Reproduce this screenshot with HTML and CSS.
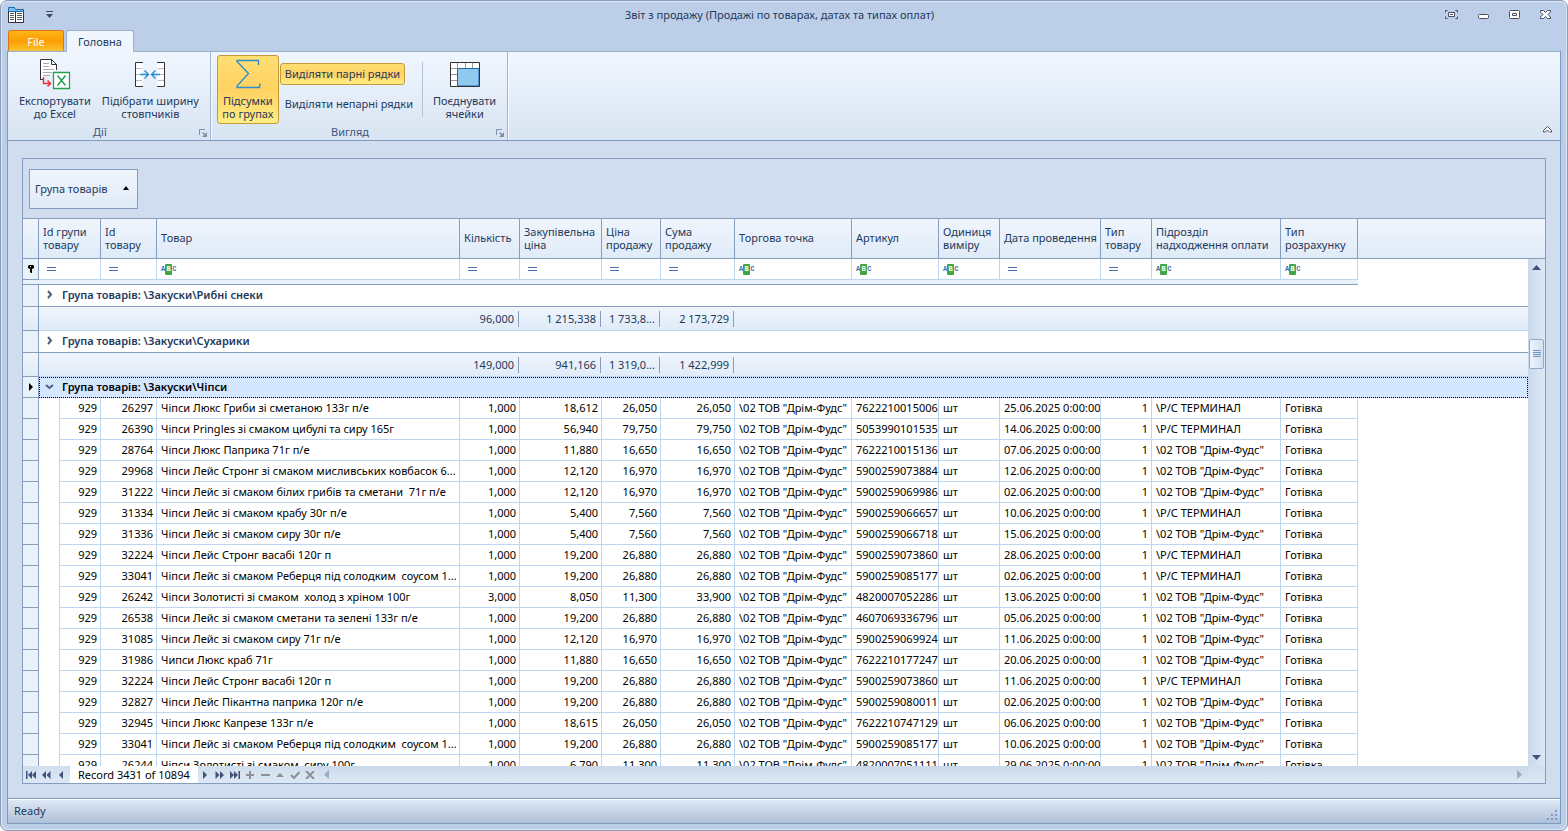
FILE: index.html
```html
<!DOCTYPE html>
<html lang="uk">
<head>
    <meta charset="UTF-8">
    <meta name="viewport" content="width=device-width, initial-scale=1.0">
    <title>Звіт з продажу</title>
    <link rel="stylesheet" href="styles.css">
</head>
<body>
    <div class="window">
        <header class="titlebar">
            <div class="quick-access">
                <svg width="16" height="16" viewBox="0 0 16 16">
                    <path d="M.5 3V15.500h15V3z" fill="#fff" stroke="#333"/>
                    <path d="M.5 4.500V.5H6.500l1 2h8v2z" fill="#83beec" stroke="#1769aa"/>
                    <path d="M7.500 5v10" stroke="#333"/>
                    <path d="M2 6.500h4M2 8.500h4M2 10.500h4M2 12.500h4M9 6.500h5M9 8.500h5M9 10.500h5M9 12.500h5" stroke="#555"/>
                </svg>
                <button type="button" class="icon-btn" aria-label="Налаштувати панель">
                    <svg width="7" height="7" viewBox="0 0 7 7"><path d="M0 .5h7" stroke="#444a5c"/><path d="M0 3h7L3.500 7z" fill="#444a5c"/></svg>
                </button>
            </div>
            <h1>Звіт з продажу (Продажі по товарах, датах та типах оплат)</h1>
            <div class="window-buttons">
                <button type="button" class="icon-btn" aria-label="На весь екран">
                    <svg width="13" height="9" viewBox="0 0 13 9" fill="none" stroke="#4a4f60"><path d="M.5 2.500v-2h2M10.500.5h2v2M.5 6.500v2h2M10.500 8.500h2v-2"/><path d="M3.500 2.500h6v4h-6z" fill="#fff"/><path d="M5 4.500h3"/></svg>
                </button>
                <button type="button" class="icon-btn" aria-label="Згорнути">
                    <svg width="11" height="9" viewBox="0 0 11 9"><rect x=".5" y="4.500" width="10" height="4" rx="1" fill="#fff" stroke="#4a4f60"/></svg>
                </button>
                <button type="button" class="icon-btn" aria-label="Відновити">
                    <svg width="11" height="9" viewBox="0 0 11 9" stroke="#4a4f60"><rect x=".5" y=".5" width="10" height="8" rx="1" fill="#fff"/><path d="M3.500 3.500h4v2h-4z" fill="none"/></svg>
                </button>
                <button type="button" class="icon-btn" aria-label="Закрити">
                    <svg width="11" height="9" viewBox="0 0 11 9"><path d="M.5.5h3l2 2 2-2h3v1.500L8 4.500l2.500 2.500v1.500h-3l-2-2-2 2h-3V7L3 4.500.5 2z" fill="#fff" stroke="#4a4f60"/></svg>
                </button>
            </div>
        </header>

        <nav class="tabs">
            <button type="button" class="tab tab-file">File</button>
            <button type="button" class="tab tab-active">Головна</button>
        </nav>

        <div class="ribbon">
            <section class="ribbon-group">
                <div class="ribbon-items">
                    <button type="button" class="big-btn">
                        <svg width="32" height="32" viewBox="0 0 32 32" fill="none">
                            <path d="M1.500 21V1.500h11l5 5V12M1 21.500h3" stroke="#333" fill="#fff"/>
                            <path d="M12.500 1.500v5h5z" stroke="#333" fill="#fff"/>
                            <path d="M4 5.500h6M4 8.500h6M4 11.500h11M4 14.500h9M4 17.500h7" stroke="#aaa"/>
                            <path d="M4.500 19v6.500H11M8.500 22.500l3 3-3 3" stroke="#e8333c" stroke-width="1.500"/>
                            <path d="M14.500 14.500h16v16h-16z" fill="#fff" stroke="#21a04f" stroke-width="1.300"/>
                            <path d="M18.500 17.500l8 10M26.500 17.500l-8 10" stroke="#21a04f" stroke-width="1.500"/>
                        </svg>
                        <span>Експортувати<br>до Excel</span>
                    </button>
                    <button type="button" class="big-btn">
                        <svg width="32" height="32" viewBox="0 0 32 32" fill="none">
                            <path d="M1.500 4.500h7v24h-7zM23.500 4.500h7v24h-7z" fill="#fff"/>
                            <path d="M2 10.500h6M2 16.500h4M2 22.500h6M24 10.500h6M26 16.500h4M24 22.500h6" stroke="#bbb"/>
                            <path d="M9 4.500H1.500v24H9M23 4.500h7.500v24H23" stroke="#333"/>
                            <path d="M6 16.500h8M10.500 12.500l4 4-4 4M26 16.500h-8M21.500 12.500l-4 4 4 4" stroke="#2a8dd0" stroke-width="1.400"/>
                        </svg>
                        <span>Підібрати ширину<br>стовпчиків</span>
                    </button>
                </div>
                <div class="ribbon-caption">Дії
                    <svg class="launcher" width="8" height="8" viewBox="0 0 8 8"><path d="M.5 6V.5H6" fill="none" stroke="#8090a8"/><path d="M8 3v5H3l2-2-2-2 1-1 2 2z" fill="#8090a8"/></svg>
                </div>
            </section>
            <section class="ribbon-group">
                <div class="ribbon-items">
                    <button type="button" class="big-btn checked" aria-pressed="true">
                        <svg width="32" height="32" viewBox="0 0 32 32"><path d="M26.500 7V2.500H5v1L16.500 15.500 5 28v1.500h22.500l.5-4" fill="none" stroke="#2b8ed0" stroke-width="1.400"/></svg>
                        <span>Підсумки<br>по групах</span>
                    </button>
                    <div class="small-btns">
                        <button type="button" class="small-btn checked" aria-pressed="true">Виділяти парні рядки</button>
                        <button type="button" class="small-btn">Виділяти непарні рядки</button>
                    </div>
                    <div class="ribbon-sep"></div>
                    <button type="button" class="big-btn">
                        <svg width="32" height="32" viewBox="0 0 32 32">
                            <path d="M1.500 4.500h29v24h-29z" fill="#fff"/>
                            <path d="M8.500 5v5M16.500 5v5M23.500 5v5M2 10.500h6M2 16.500h6M2 22.500h6" stroke="#999"/>
                            <path d="M8.500 28V10.500H30V28z" fill="#91c8ee" stroke="#1a68ae"/>
                            <path d="M1.500 4.500h29v24h-29z" fill="none" stroke="#333"/>
                        </svg>
                        <span>Поєднувати<br>ячейки</span>
                    </button>
                </div>
                <div class="ribbon-caption">Вигляд
                    <svg class="launcher" width="8" height="8" viewBox="0 0 8 8"><path d="M.5 6V.5H6" fill="none" stroke="#8090a8"/><path d="M8 3v5H3l2-2-2-2 1-1 2 2z" fill="#8090a8"/></svg>
                </div>
            </section>
            <button type="button" class="icon-btn collapse" aria-label="Згорнути стрічку">
                <svg width="9" height="7" viewBox="0 0 9 7"><path d="M.5 4.500l4-4 4 4v1.500h-2l-2-2-2 2h-2z" fill="#fff" stroke="#4a4f60"/></svg>
            </button>
        </div>

        <main class="workspace">
            <div class="grid">
                <div class="group-panel">
                    <button type="button" class="group-chip">Група товарів
                        <svg width="6" height="4" viewBox="0 0 6 4"><path d="M0 4h6L3 0z" fill="#000"/></svg>
                    </button>
                </div>
                <div class="grid-view">
                    <table class="report">
                        <colgroup>
                            <col class="c-mark"><col class="c-indent"><col class="c-group"><col class="c-id"><col class="c-name">
                            <col class="c-qty"><col class="c-buy"><col class="c-price"><col class="c-sum"><col class="c-shop">
                            <col class="c-code"><col class="c-unit"><col class="c-date"><col class="c-type"><col class="c-dept">
                            <col class="c-pay"><col><col class="c-scroll">
                        </colgroup>
                        <thead>
                            <tr>
                                <th></th>
                                <th colspan="2">Id групи<br>товару</th>
                                <th>Id<br>товару</th>
                                <th>Товар</th>
                                <th>Кількість</th>
                                <th>Закупівельна<br>ціна</th>
                                <th>Ціна<br>продажу</th>
                                <th>Сума<br>продажу</th>
                                <th>Торгова точка</th>
                                <th>Артикул</th>
                                <th>Одиниця<br>виміру</th>
                                <th>Дата проведення</th>
                                <th>Тип<br>товару</th>
                                <th>Підрозділ<br>надходження оплати</th>
                                <th>Тип<br>розрахунку</th>
                                <th class="rest" colspan="2"></th>
                            </tr>
                        </thead>
                        <tbody id="reportBody"></tbody>
                    </table>
                    <div class="vscroll">
                        <svg width="9" height="5" viewBox="0 0 9 5"><path d="M0 5h9L4.500 0z" fill="#45517a"/></svg>
                        <div class="thumb">
                            <svg width="8" height="8" viewBox="0 0 8 8"><path d="M0 .5h8M0 2.500h8M0 4.500h8M0 6.500h8" stroke="#7493c4"/></svg>
                        </div>
                        <svg width="9" height="5" viewBox="0 0 9 5"><path d="M0 0h9L4.500 5z" fill="#45517a"/></svg>
                    </div>
                </div>
                <div class="navigator">
                    <button type="button" aria-label="Перший"><svg width="10" height="8" viewBox="0 0 10 8"><path d="M0 0h1.500v8H0zM6 0v8L2 4zM10 0v8L6 4z"/></svg></button>
                    <button type="button" aria-label="Попередня сторінка"><svg width="10" height="8" viewBox="0 0 10 8"><path d="M5 0v8L1 4zM9.500 0v8l-4-4z"/></svg></button>
                    <button type="button" aria-label="Попередній"><svg width="10" height="8" viewBox="0 0 10 8"><path d="M7 0v8L3 4z"/></svg></button>
                    <span class="record">Record 3431 of 10894</span>
                    <button type="button" aria-label="Наступний"><svg width="10" height="8" viewBox="0 0 10 8"><path d="M3 0v8l4-4z"/></svg></button>
                    <button type="button" aria-label="Наступна сторінка"><svg width="10" height="8" viewBox="0 0 10 8"><path d="M.5 0v8l4-4zM5 0v8l4-4z"/></svg></button>
                    <button type="button" aria-label="Останній"><svg width="10" height="8" viewBox="0 0 10 8"><path d="M0 0v8l4-4zM4 0v8l4-4zM8.500 0H10v8H8.500z"/></svg></button>
                    <button type="button" class="off" aria-label="Додати"><svg width="10" height="8" viewBox="0 0 10 8"><path d="M4 0h2v3h3v2H6v3H4V5H1V3h3z"/></svg></button>
                    <button type="button" class="off" aria-label="Видалити"><svg width="10" height="8" viewBox="0 0 10 8"><path d="M1 3h9v2H1z"/></svg></button>
                    <button type="button" class="off" aria-label="Редагувати"><svg width="10" height="8" viewBox="0 0 10 8"><path d="M1 6h8L5 2z"/></svg></button>
                    <button type="button" class="off" aria-label="Зберегти"><svg width="10" height="8" viewBox="0 0 10 8"><path d="M1 4l3 3 5.500-6" fill="none" stroke="#8f9092" stroke-width="2"/></svg></button>
                    <button type="button" class="off" aria-label="Скасувати"><svg width="10" height="8" viewBox="0 0 10 8"><path d="M1 0l8 8M9 0L1 8" fill="none" stroke="#8f9092" stroke-width="2"/></svg></button>
                    <div class="hscroll">
                        <svg width="5" height="9" viewBox="0 0 5 9"><path d="M5 0v9L0 4.500z" fill="#9aabc8"/></svg>
                        <svg width="5" height="9" viewBox="0 0 5 9"><path d="M0 0v9l5-4.500z" fill="#9aabc8"/></svg>
                    </div>
                </div>
            </div>
        </main>

        <footer class="statusbar">
            <span>Ready</span>
            <svg width="11" height="11" viewBox="0 0 11 11" fill="#7f9cc4"><path d="M8 0h2v2H8zM4 4h2v2H4zM8 4h2v2H8zM0 8h2v2H0zM4 8h2v2H4zM8 8h2v2H8z"/></svg>
        </footer>
    </div>

    <script>
        const SHOP = '\\02 ТОВ "Дрім-Фудс"';
        const TERMINAL = '\\Р/С ТЕРМИНАЛ';

        // id, товар, кількість, закупівельна ціна, ціна, сума, артикул, дата, підрозділ
        const rows = [
            ['26297', 'Чіпси Люкс Гриби зі сметаною 133г п/е', '1,000', '18,612', '26,050', '26,050', '7622210015006', '25.06.2025', TERMINAL],
            ['26390', 'Чіпси Pringles зі смаком цибулі та сиру 165г', '1,000', '56,940', '79,750', '79,750', '5053990101535', '14.06.2025', TERMINAL],
            ['28764', 'Чіпси Люкс Паприка 71г п/е', '1,000', '11,880', '16,650', '16,650', '7622210015136', '07.06.2025', SHOP],
            ['29968', 'Чіпси Лейс Стронг зі смаком мисливських ковбасок 6...', '1,000', '12,120', '16,970', '16,970', '5900259073884', '12.06.2025', SHOP],
            ['31222', 'Чіпси Лейс зі смаком білих грибів та сметани  71г п/е', '1,000', '12,120', '16,970', '16,970', '5900259069986', '02.06.2025', SHOP],
            ['31334', 'Чіпси Лейс зі смаком крабу 30г п/е', '1,000', '5,400', '7,560', '7,560', '5900259066657', '10.06.2025', TERMINAL],
            ['31336', 'Чіпси Лейс зі смаком сиру 30г п/е', '1,000', '5,400', '7,560', '7,560', '5900259066718', '15.06.2025', SHOP],
            ['32224', 'Чіпси Лейс Стронг васабі 120г п', '1,000', '19,200', '26,880', '26,880', '5900259073860', '28.06.2025', TERMINAL],
            ['33041', 'Чіпси Лейс зі смаком Реберця під солодким  соусом 1...', '1,000', '19,200', '26,880', '26,880', '5900259085177', '02.06.2025', TERMINAL],
            ['26242', 'Чіпси Золотисті зі смаком  холод з хріном 100г', '3,000', '8,050', '11,300', '33,900', '4820007052286', '13.06.2025', SHOP],
            ['26538', 'Чіпси Лейс зі смаком сметани та зелені 133г п/е', '1,000', '19,200', '26,880', '26,880', '4607069336796', '05.06.2025', SHOP],
            ['31085', 'Чіпси Лейс зі смаком сиру 71г п/е', '1,000', '12,120', '16,970', '16,970', '5900259069924', '11.06.2025', SHOP],
            ['31986', 'Чипси Люкс краб 71г', '1,000', '11,880', '16,650', '16,650', '7622210177247', '20.06.2025', SHOP],
            ['32224', 'Чіпси Лейс Стронг васабі 120г п', '1,000', '19,200', '26,880', '26,880', '5900259073860', '11.06.2025', TERMINAL],
            ['32827', 'Чіпси Лейс Пікантна паприка 120г п/е', '1,000', '19,200', '26,880', '26,880', '5900259080011', '02.06.2025', SHOP],
            ['32945', 'Чіпси Люкс Капрезе 133г п/е', '1,000', '18,615', '26,050', '26,050', '7622210747129', '06.06.2025', SHOP],
            ['33041', 'Чіпси Лейс зі смаком Реберця під солодким  соусом 1...', '1,000', '19,200', '26,880', '26,880', '5900259085177', '10.06.2025', SHOP],
            ['26244', 'Чіпси Золотисті зі смаком  сиру 100г', '1,000', '6,790', '11,300', '11,300', '4820007051111', '29.06.2025', SHOP]
        ];

        const EQ = '<svg class="eq" width="9" height="4" viewBox="0 0 9 4"><path d="M0 .5h9M0 3.500h9" stroke="#4a6ea9"/></svg>';
        const ABC = '<span class="abc">A<b>B</b>C</span>';
        const PIN = '<svg width="6" height="8" viewBox="0 0 6 8"><path d="M1 0h4l1 1v2L4 4v4H3L2 7V4L0 3V1z"/><path d="M2 1h1v1H2z" fill="#fff"/></svg>';
        const CURSOR = '<svg width="5" height="8" viewBox="0 0 5 8"><path d="M1 0v8l4-4z"/></svg>';

        function filterRow() {
            const kinds = [EQ, ABC, EQ, EQ, EQ, EQ, ABC, ABC, ABC, EQ, EQ, ABC, ABC];
            return '<tr class="filter"><td class="mark">' + PIN + '</td><td colspan="2">' + EQ + '</td>' +
                kinds.map(k => '<td>' + k + '</td>').join('') + '<td class="rest" colspan="2"></td></tr>' +
                '<tr class="filter-gap"><td colspan="16"></td><td class="rest" colspan="2"></td></tr>';
        }

        function groupRow(name, open) {
            const arrow = open ? 'M1 3l3.500 3L8 3' : 'M3 1l3 3.500L3 8';
            return '<tr class="group' + (open ? ' focused' : '') + '"><td class="mark">' + (open ? CURSOR : '') + '</td><td colspan="16">' +
                '<svg width="9" height="9" viewBox="0 0 9 9"><path d="' + arrow + '" fill="none" stroke="#505c7d" stroke-width="2"/></svg>' +
                'Група товарів: \\Закуски\\' + name + '</td><td class="rest"></td></tr>';
        }

        function summaryRow(values) {
            return '<tr class="summary"><td class="mark"></td><td colspan="4"></td>' +
                values.map(v => '<td><span>' + v + '</span></td>').join('') + '<td colspan="8"></td><td class="rest"></td></tr>';
        }

        function dataRow(r) {
            return '<tr class="data"><td class="mark"></td><td class="indent"></td><td class="num">929</td><td class="num">' + r[0] + '</td><td>' + r[1] + '</td>' +
                r.slice(2, 6).map(v => '<td class="num">' + v + '</td>').join('') +
                '<td>' + SHOP + '</td><td>' + r[6] + '</td><td>шт</td><td>' + r[7] + ' 0:00:00</td><td class="num">1</td><td>' + r[8] +
                '</td><td>Готівка</td><td class="rest" colspan="2"></td></tr>';
        }

        document.getElementById('reportBody').innerHTML =
            filterRow() +
            groupRow('Рибні снеки', false) + summaryRow(['96,000', '1 215,338', '1 733,8...', '2 173,729']) +
            groupRow('Сухарики', false) + summaryRow(['149,000', '941,166', '1 319,0...', '1 422,999']) +
            groupRow('Чіпси', true) +
            rows.map(dataRow).join('');
    </script>
</body>
</html>
```
FILE: styles.css
```css
* {
    box-sizing: border-box;
}
body {
    margin: 0;
    background-color: #fff;
    font-family: "Noto Sans", sans-serif;
    font-size: 11px;
    line-height: 13px;
    color: #1e395b;
}
button {
    font: inherit;
    color: inherit;
    background: none;
    border: 0;
    padding: 0;
}
svg {
    display: block;
    flex: none;
}
.window {
    display: flex;
    flex-direction: column;
    height: 100vh;
    padding: 0 6px 6px;
    border: 1px solid #8a9bb5;
    border-radius: 7px;
    background-color: #bdcfe8;
    box-shadow: inset 0 0 0 1px #dce8f6;
}

/* title */
.titlebar {
    display: grid;
    grid-template-columns: 1fr auto 1fr;
    align-items: center;
    height: 29px;
    padding: 0 10px 2px 1px;
}
.titlebar h1 {
    margin: 0;
    font-size: 11px;
    font-weight: normal;
}
.quick-access {
    display: flex;
    align-items: center;
    gap: 22px;
}
.window-buttons {
    display: flex;
    justify-content: flex-end;
    gap: 20px;
}

/* tabs */
.tabs {
    display: flex;
    gap: 2px;
    height: 21px;
    padding-left: 1px;
}
.tab {
    height: 22px;
    border: 1px solid #9db1cf;
    border-bottom: 0;
    border-radius: 3px 3px 0 0;
}
.tab-file {
    width: 56px;
    height: 21px;
    border-color: #d9741c;
    background: linear-gradient(#fdb515, #fb9d05 50%, #fdc42a);
    color: #fff;
}
.tab-active {
    position: relative;
    width: 68px;
    background-color: #f0f6fe;
}

/* ribbon */
.ribbon {
    display: flex;
    height: 90px;
    border: 1px solid #7f9cc0;
    border-top-color: #9db1cf;
    background: linear-gradient(#f0f6fe, #d8e4f2);
    box-shadow: 0 1px 3px #a9bcd6;
}
.ribbon-group {
    display: flex;
    flex-direction: column;
    padding-top: 3px;
    border-right: 1px solid #a3b7d3;
    box-shadow: 1px 0 0 #f5f9fe;
}
.ribbon-items {
    display: flex;
    height: 69px;
    gap: 1px;
    padding: 0 6px;
}
.big-btn {
    display: flex;
    flex-direction: column;
    align-items: center;
    min-width: 62px;
    padding: 2px 4px 0;
    border: 1px solid transparent;
    border-radius: 3px;
    white-space: nowrap;
}
.big-btn span {
    margin-top: 4px;
}
.checked {
    border-color: #c29a3a;
    background: linear-gradient(#ffdf72, #ffd262 50%, #ffed84);
}
.small-btns {
    display: flex;
    flex-direction: column;
    align-items: flex-start;
    gap: 8px;
    padding-top: 8px;
}
.small-btn {
    height: 22px;
    padding: 0 4px 2px;
    border: 1px solid transparent;
    border-radius: 3px;
    white-space: nowrap;
}
.small-btn.checked {
    border-color: #c29a3a;
}
.ribbon-sep {
    width: 1px;
    margin: 7px 4px 7px 3px;
    background-color: #b4c4da;
}
.ribbon-caption {
    display: flex;
    align-items: center;
    justify-content: center;
    position: relative;
    height: 16px;
    padding: 0 18px 2px 0;
    color: #3b5580;
}
.launcher {
    position: absolute;
    right: 3px;
    bottom: 3px;
}
.collapse {
    align-self: flex-end;
    margin: 0 8px 7px auto;
}

/* grid frame */
.workspace {
    flex: 1;
    min-height: 0;
    padding: 17px 14px 14px;
    border: solid #7f9cc0;
    border-width: 0 1px;
    background-color: #cfddee;
}
.grid {
    display: flex;
    flex-direction: column;
    height: 100%;
    border: 1px solid #859ebf;
}
.group-panel {
    padding: 10px 6px 9px;
}
.group-chip {
    display: flex;
    align-items: center;
    justify-content: space-between;
    min-width: 109px;
    height: 40px;
    padding: 0 8px 2px 5px;
    border: 1px solid #859ebf;
    background: linear-gradient(#f0f5fc, #dfeaf8);
}
.grid-view {
    position: relative;
    flex: 1;
    overflow: hidden;
    background-color: #fff;
}

/* report table */
.report {
    width: 100%;
    table-layout: fixed;
    border-collapse: separate;
    border-spacing: 0;
}
.c-mark { width: 16px; }
.c-indent { width: 21px; }
.c-group { width: 41px; }
.c-id { width: 56px; }
.c-name { width: 303px; }
.c-qty { width: 60px; }
.c-buy { width: 82px; }
.c-price { width: 59px; }
.c-sum { width: 74px; }
.c-shop { width: 117px; }
.c-code { width: 87px; }
.c-unit { width: 61px; }
.c-date { width: 101px; }
.c-type { width: 51px; }
.c-dept { width: 129px; }
.c-pay { width: 77px; }
.c-scroll { width: 17px; }
.report th {
    height: 41px;
    padding: 0 0 2px 4px;
    border: solid #859ebf;
    border-width: 1px 1px 1px 0;
    background: linear-gradient(#f0f5fc, #dfebf8);
    font-weight: normal;
    text-align: left;
    white-space: nowrap;
}
.report td {
    padding: 0 3px 0 4px;
    border: solid #bfd5f2;
    border-width: 0 1px 1px 0;
    overflow: hidden;
    white-space: pre;
}
.report th.rest,
.report td.rest {
    border-right: 0;
}
.report td.rest {
    border-bottom: 0;
}
.report td.mark {
    padding: 0 0 0 5px;
    border-color: #859ebf;
    background-color: #e9f1fb;
}
.filter td {
    height: 21px;
}
.filter .eq {
    margin-left: 4px;
}
.filter-gap td {
    height: 5px;
    border-right: 0;
    border-color: #859ebf;
    background-color: #e9f1fb;
}
.filter-gap td.rest {
    background: none;
}
.abc {
    display: flex;
    align-items: center;
    font-family: "Liberation Mono", monospace;
    font-size: 7px;
    font-weight: bold;
    line-height: 11px;
    color: #4a6ea9;
}
.abc b {
    width: 7px;
    border-radius: 1px;
    background-color: #3fa648;
    color: #fff;
    text-align: center;
}
.group td {
    height: 22px;
    border-right: 0;
    font-weight: 600;
}
.report .group td:nth-child(2) {
    padding: 0 0 2px 6px;
    border-color: #859ebf;
}
.group td.mark {
    border-right: 1px solid #859ebf;
}
.group td:nth-child(2) svg {
    display: inline-block;
    margin-right: 8px;
}
.group.focused td {
    height: 21px;
    color: #000;
}
.report .focused td:nth-child(2) {
    padding-left: 5px;
    border: 1px dotted #000;
    background-color: #d5e7ff;
}
.summary td {
    height: 24px;
    border-right: 0;
    background: linear-gradient(#f0f5fc, #dfebf8);
}
.summary td.mark {
    border-right: 1px solid #859ebf;
}
.summary td.rest {
    background: none;
}
.summary td span {
    display: block;
    margin-right: -2px;
    padding-right: 4px;
    border-right: 1px solid #859ebf;
    line-height: 16px;
    text-align: right;
}
.report .data td {
    height: 21px;
    padding-bottom: 2px;
    color: #000;
}
.data td.indent {
    border-bottom: 0;
}
.report td.num {
    padding-left: 0;
    text-align: right;
}

/* scrollbars */
.vscroll {
    position: absolute;
    top: 41px;
    right: 0;
    bottom: 0;
    display: flex;
    flex-direction: column;
    align-items: center;
    width: 17px;
    padding: 6px 0;
    background: linear-gradient(90deg, #c9d9eb, #dde8f4);
}
.thumb {
    display: flex;
    align-items: center;
    justify-content: center;
    width: 15px;
    height: 30px;
    margin: 69px 0 auto;
    border: 1px solid #8faad0;
    border-radius: 2px;
    background: linear-gradient(90deg, #edf3fb, #d3e1f2);
}
.navigator {
    display: flex;
    height: 17px;
    background: linear-gradient(#d0deed, #dce8f4);
}
.navigator button {
    display: flex;
    align-items: center;
    justify-content: center;
    width: 15px;
    fill: #45517a;
}
.navigator button.off {
    fill: #8f9092;
}
.record {
    min-width: 126px;
    margin-left: 2px;
    padding: 0 8px;
    background-color: #fff;
    color: #000;
    line-height: 17px;
}
.hscroll {
    display: flex;
    flex: 1;
    align-items: center;
    justify-content: space-between;
    margin-right: 17px;
    padding: 0 6px;
    background: linear-gradient(#c9d9eb, #dde8f4);
}

/* status */
.statusbar {
    display: flex;
    align-items: center;
    justify-content: space-between;
    height: 26px;
    padding: 0 2px 2px 6px;
    border: 1px solid #7f9cc0;
    background: linear-gradient(#dfe9f6, #afc1d8);
    box-shadow: inset 0 1px 0 #fff;
}
.statusbar svg {
    align-self: flex-end;
}
```
